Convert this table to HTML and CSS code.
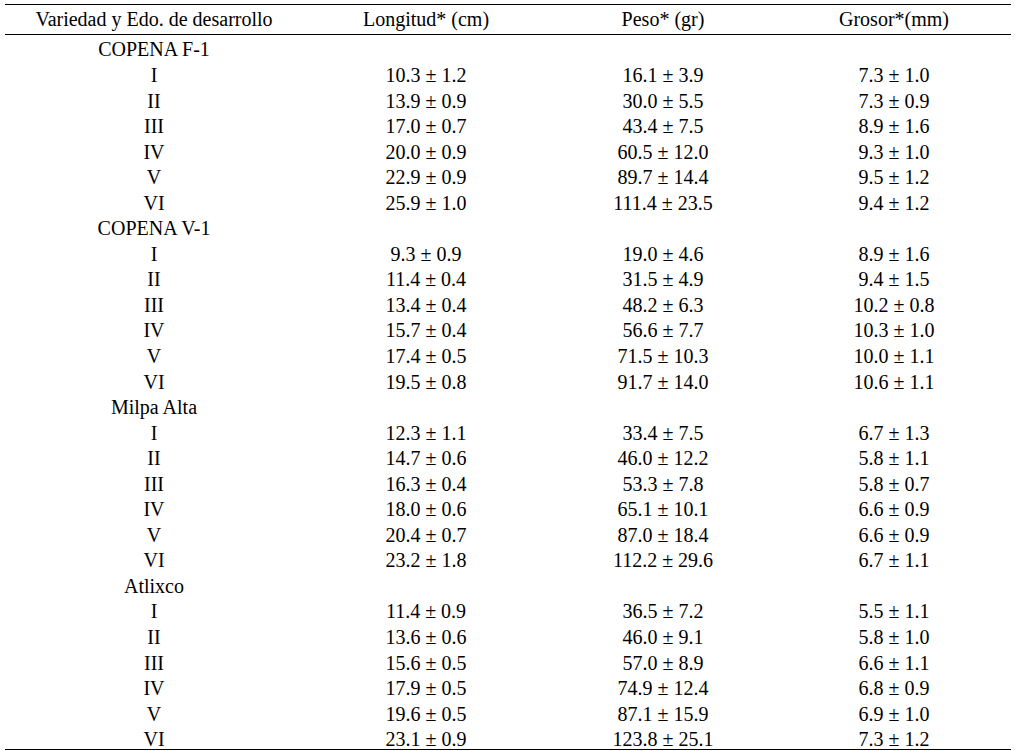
FILE: index.html
```html
<!DOCTYPE html>
<html lang="es">
<head>
<meta charset="utf-8">
<title>Tabla</title>
<link rel="stylesheet" href="styles.css">
</head>
<body>
<div class="table">
  <div class="row head">
    <div>Variedad y Edo. de desarrollo</div><div>Longitud* (cm)</div><div>Peso* (gr)</div><div>Grosor*(mm)</div>
  </div>
  <div class="body">
    <div class="row"><div>COPENA F-1</div><div></div><div></div><div></div></div>
    <div class="row"><div>I</div><div>10.3 ± 1.2</div><div>16.1 ± 3.9</div><div>7.3 ± 1.0</div></div>
    <div class="row"><div>II</div><div>13.9 ± 0.9</div><div>30.0 ± 5.5</div><div>7.3 ± 0.9</div></div>
    <div class="row"><div>III</div><div>17.0 ± 0.7</div><div>43.4 ± 7.5</div><div>8.9 ± 1.6</div></div>
    <div class="row"><div>IV</div><div>20.0 ± 0.9</div><div>60.5 ± 12.0</div><div>9.3 ± 1.0</div></div>
    <div class="row"><div>V</div><div>22.9 ± 0.9</div><div>89.7 ± 14.4</div><div>9.5 ± 1.2</div></div>
    <div class="row"><div>VI</div><div>25.9 ± 1.0</div><div>111.4 ± 23.5</div><div>9.4 ± 1.2</div></div>
    <div class="row"><div>COPENA V-1</div><div></div><div></div><div></div></div>
    <div class="row"><div>I</div><div>9.3 ± 0.9</div><div>19.0 ± 4.6</div><div>8.9 ± 1.6</div></div>
    <div class="row"><div>II</div><div>11.4 ± 0.4</div><div>31.5 ± 4.9</div><div>9.4 ± 1.5</div></div>
    <div class="row"><div>III</div><div>13.4 ± 0.4</div><div>48.2 ± 6.3</div><div>10.2 ± 0.8</div></div>
    <div class="row"><div>IV</div><div>15.7 ± 0.4</div><div>56.6 ± 7.7</div><div>10.3 ± 1.0</div></div>
    <div class="row"><div>V</div><div>17.4 ± 0.5</div><div>71.5 ± 10.3</div><div>10.0 ± 1.1</div></div>
    <div class="row"><div>VI</div><div>19.5 ± 0.8</div><div>91.7 ± 14.0</div><div>10.6 ± 1.1</div></div>
    <div class="row"><div>Milpa Alta</div><div></div><div></div><div></div></div>
    <div class="row"><div>I</div><div>12.3 ± 1.1</div><div>33.4 ± 7.5</div><div>6.7 ± 1.3</div></div>
    <div class="row"><div>II</div><div>14.7 ± 0.6</div><div>46.0 ± 12.2</div><div>5.8 ± 1.1</div></div>
    <div class="row"><div>III</div><div>16.3 ± 0.4</div><div>53.3 ± 7.8</div><div>5.8 ± 0.7</div></div>
    <div class="row"><div>IV</div><div>18.0 ± 0.6</div><div>65.1 ± 10.1</div><div>6.6 ± 0.9</div></div>
    <div class="row"><div>V</div><div>20.4 ± 0.7</div><div>87.0 ± 18.4</div><div>6.6 ± 0.9</div></div>
    <div class="row"><div>VI</div><div>23.2 ± 1.8</div><div>112.2 ± 29.6</div><div>6.7 ± 1.1</div></div>
    <div class="row"><div>Atlixco</div><div></div><div></div><div></div></div>
    <div class="row"><div>I</div><div>11.4 ± 0.9</div><div>36.5 ± 7.2</div><div>5.5 ± 1.1</div></div>
    <div class="row"><div>II</div><div>13.6 ± 0.6</div><div>46.0 ± 9.1</div><div>5.8 ± 1.0</div></div>
    <div class="row"><div>III</div><div>15.6 ± 0.5</div><div>57.0 ± 8.9</div><div>6.6 ± 1.1</div></div>
    <div class="row"><div>IV</div><div>17.9 ± 0.5</div><div>74.9 ± 12.4</div><div>6.8 ± 0.9</div></div>
    <div class="row"><div>V</div><div>19.6 ± 0.5</div><div>87.1 ± 15.9</div><div>6.9 ± 1.0</div></div>
    <div class="row last"><div>VI</div><div>23.1 ± 0.9</div><div>123.8 ± 25.1</div><div>7.3 ± 1.2</div></div>
  </div>
</div>
</body>
</html>
```
FILE: styles.css
```css
html, body {
  margin: 0;
  padding: 0;
  background: #fff;
}
body {
  font-family: "Liberation Serif", "Times New Roman", serif;
  font-size: 20px;
  color: #000;
}
.table {
  margin: 4px 0 0 5px;
  width: 1006px;
  border-top: 1px solid #000;
  border-bottom: 1px solid #000;
}
.row {
  display: grid;
  grid-template-columns: 298px 246px 228px 234px;
  height: 25.55px;
  line-height: 25.55px;
  text-align: center;
  white-space: nowrap;
}
.head {
  height: 29px;
  line-height: 29px;
  border-bottom: 1px solid #000;
}
.body {
  padding-top: 2.45px;
}
.row.last {
  height: 21.7px;
}
```
